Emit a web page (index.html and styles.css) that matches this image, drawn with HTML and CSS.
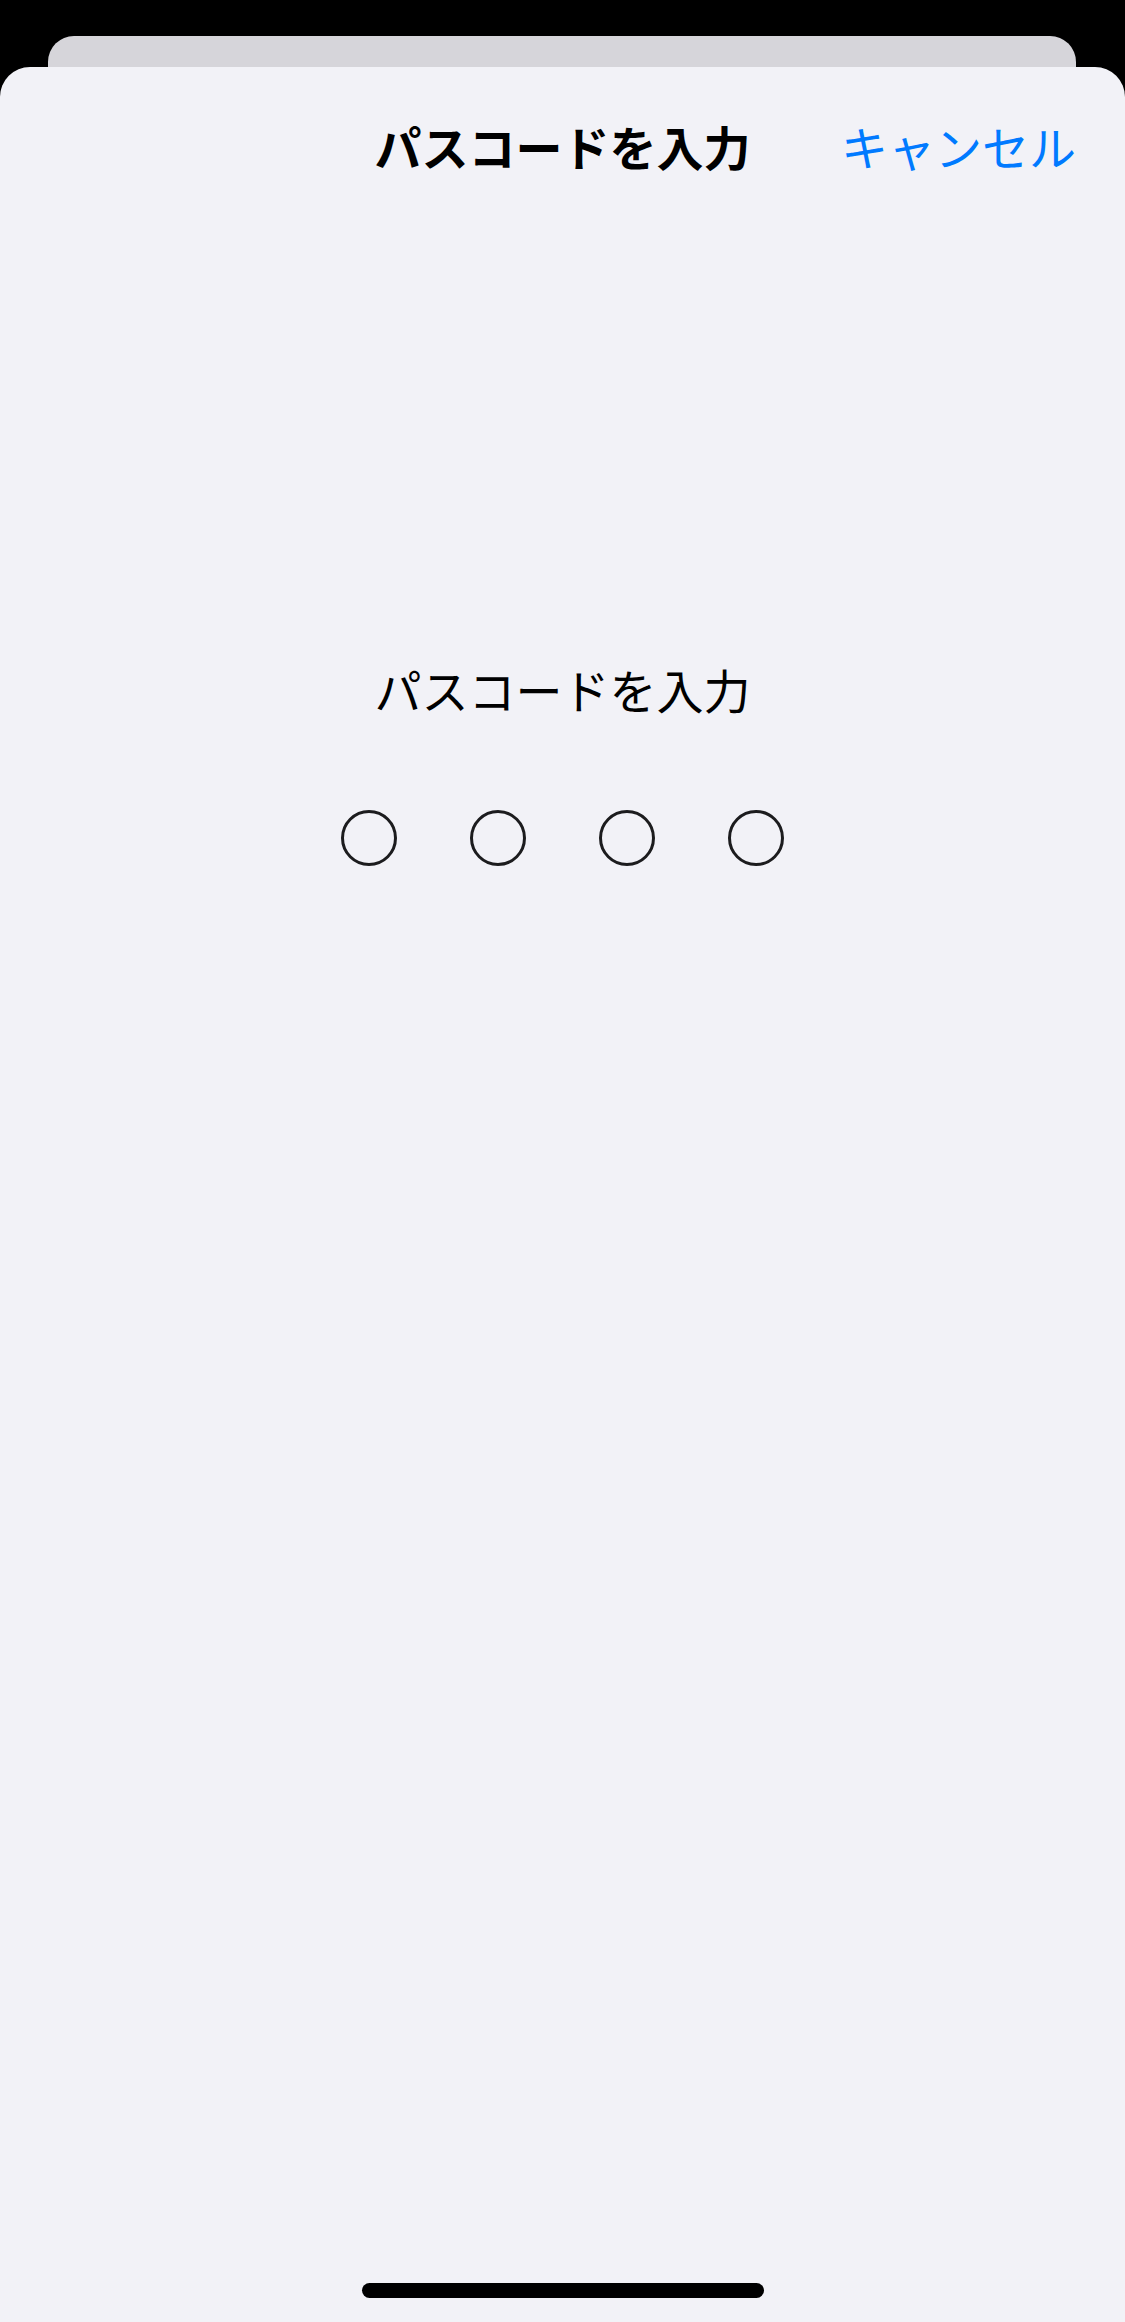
FILE: index.html
```html
<!DOCTYPE html>
<html lang="ja">
<head>
<meta charset="utf-8">
<title>パスコードを入力</title>
<link rel="stylesheet" href="styles.css">
</head>
<body>
<div class="screen">
  <div class="back-card"></div>
  <div class="sheet">
    <header class="nav">
      <div class="nav-side"></div>
      <h1 class="nav-title">パスコードを入力</h1>
      <div class="nav-side nav-right"><span class="cancel">キャンセル</span></div>
    </header>
    <main class="content">
      <p class="prompt">パスコードを入力</p>
      <div class="dots">
        <span class="dot"></span>
        <span class="dot"></span>
        <span class="dot"></span>
        <span class="dot"></span>
      </div>
    </main>
    <div class="home-bar"><span class="home-indicator"></span></div>
  </div>
</div>
</body>
</html>
```

FILE: styles.css
```css
html, body {
  margin: 0;
  padding: 0;
  background: #000;
}
body {
  font-family: "Noto Sans CJK JP", "Noto Sans", sans-serif;
}
.screen {
  width: 1125px;
  height: 2322px;
  display: flex;
  flex-direction: column;
  padding-top: 36px;
  box-sizing: border-box;
  overflow: hidden;
}
.back-card {
  height: 31px;
  margin: 0 49px 0 48px;
  background: #d6d5da;
  border-radius: 26px 26px 0 0;
  flex: none;
}
.sheet {
  flex: 1;
  background: #f2f2f7;
  border-radius: 30px 30px 0 0;
  display: flex;
  flex-direction: column;
}
.nav {
  display: grid;
  grid-template-columns: 1fr auto 1fr;
  align-items: center;
  padding: 51px 49px 0 49px;
}
.nav-title {
  margin: 0;
  font-size: 47px;
  line-height: 56px;
  font-weight: 700;
  color: #000;
}
.nav-right {
  display: flex;
  justify-content: flex-end;
}
.cancel {
  font-size: 47px;
  line-height: 56px;
  color: #007aff;
  font-weight: 400;
}
.content {
  flex: 1;
  display: flex;
  flex-direction: column;
  align-items: center;
  padding-top: 487px;
}
.prompt {
  margin: 0;
  font-size: 47px;
  line-height: 56px;
  font-weight: 400;
  color: #000;
}
.dots {
  display: flex;
  gap: 73px;
  margin-top: 93px;
}
.dot {
  width: 56px;
  height: 56px;
  box-sizing: border-box;
  border: 3px solid #1c1c1e;
  border-radius: 50%;
}
.home-bar {
  display: flex;
  justify-content: center;
  padding-bottom: 24px;
}
.home-indicator {
  width: 402px;
  height: 15px;
  border-radius: 8px;
  background: #000;
}
```
